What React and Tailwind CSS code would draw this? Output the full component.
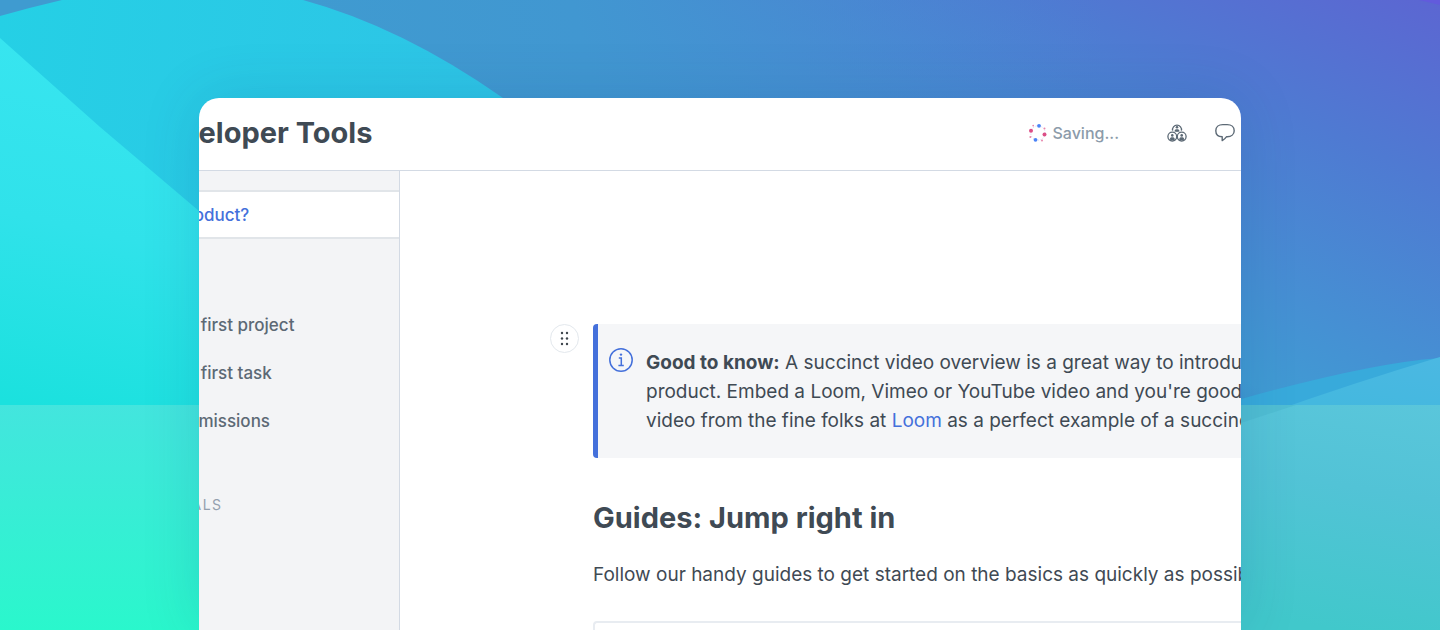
import React from "react";

function Backdrop() {
  return (
    <svg
      className="absolute inset-0 h-full w-full"
      viewBox="0 0 1440 630"
      preserveAspectRatio="none"
      aria-hidden="true"
    >
      <defs>
        <linearGradient id="sky" gradientUnits="userSpaceOnUse" x1="1440" y1="0" x2="1240" y2="430">
          <stop offset="0" stopColor="#5c66d2" />
          <stop offset="0.35" stopColor="#4f7ad2" />
          <stop offset="0.7" stopColor="#468fd3" />
          <stop offset="0.9" stopColor="#409bd3" />
          <stop offset="1" stopColor="#3b92cf" />
        </linearGradient>
        <linearGradient id="skyLeft" gradientUnits="userSpaceOnUse" x1="300" y1="100" x2="1100" y2="-80">
          <stop offset="0" stopColor="#3f9bd0" />
          <stop offset="0.35" stopColor="#4197d1" />
          <stop offset="1" stopColor="#4c82d2" stopOpacity="0" />
        </linearGradient>
        <linearGradient id="dome" gradientUnits="userSpaceOnUse" x1="0" y1="0" x2="500" y2="60">
          <stop offset="0" stopColor="#25d0e5" />
          <stop offset="1" stopColor="#2ec4e6" />
        </linearGradient>
        <linearGradient id="slope" gradientUnits="userSpaceOnUse" x1="80" y1="40" x2="0" y2="400">
          <stop offset="0" stopColor="#38e5f0" />
          <stop offset="0.5" stopColor="#30e2ea" />
          <stop offset="1" stopColor="#1be1de" />
        </linearGradient>
        <linearGradient id="seaLeft" gradientUnits="userSpaceOnUse" x1="0" y1="405" x2="0" y2="630">
          <stop offset="0" stopColor="#43e5de" />
          <stop offset="1" stopColor="#2af7cc" />
        </linearGradient>
        <linearGradient id="seaRight" gradientUnits="userSpaceOnUse" x1="1440" y1="405" x2="1400" y2="640">
          <stop offset="0" stopColor="#5ac6db" />
          <stop offset="0.4" stopColor="#52c3d6" />
          <stop offset="1" stopColor="#41c8cb" />
        </linearGradient>
        <linearGradient id="hill" gradientUnits="userSpaceOnUse" x1="1440" y1="358" x2="1430" y2="420">
          <stop offset="0" stopColor="#4bb8e2" />
          <stop offset="1" stopColor="#44b8df" />
        </linearGradient>
      </defs>
      <rect width="1440" height="630" fill="url(#sky)" />
      <rect width="1100" height="200" fill="url(#skyLeft)" />
      <path d="M1419 0L1440 5V0Z" fill="#625bdc" />
      <path d="M0 16Q32 7 62 0H303Q402 27 503 98L700 260V405H0Z" fill="url(#dome)" />
      <path d="M0 38L100 127L199 211L400 380V405H0Z" fill="url(#slope)" />
      <path d="M1100 440L1241 399Q1370 363 1440 358V480H1100Z" fill="#38aadb" />
      <path d="M1100 474L1241 423Q1340 387 1440 357V480H1100Z" fill="url(#hill)" />
      <rect y="405" width="720" height="225" fill="url(#seaLeft)" />
      <rect x="720" y="405" width="720" height="225" fill="url(#seaRight)" />
      <path d="M1100 405H1296L1241 423L1100 474Z" fill="#50bed3" />
    </svg>
  );
}

function SavingDots() {
  return (
    <svg className="size-5" viewBox="0 0 20 20" aria-hidden="true">
      <circle cx="9" cy="10" r="7.2" fill="none" stroke="#c9c9ee" strokeWidth="0.8" strokeDasharray="1 1.6" />
      <circle cx="10" cy="2.8" r="1.9" fill="#4a83f7" />
      <circle cx="6.5" cy="16.8" r="1.9" fill="#4a83f7" />
      <circle cx="2" cy="7.8" r="2" fill="#dc4f87" />
      <circle cx="15.5" cy="11.6" r="2" fill="#dc4f87" />
      <circle cx="4.2" cy="2.6" r="0.9" fill="#e887ac" />
      <circle cx="15.5" cy="5.4" r="1" fill="#e887ac" />
      <circle cx="1.4" cy="14" r="1" fill="#e887ac" />
      <circle cx="13" cy="17.6" r="1" fill="#e887ac" />
    </svg>
  );
}

function Person({ x, y }) {
  return (
    <g transform={`translate(${x} ${y})`}>
      <circle cx="0" cy="-1.3" r="1.3" fill="currentColor" stroke="none" />
      <path d="M-2.6 2.7C-2.2 0.7-1.2 0.6 0 0.6S2.2 0.7 2.6 2.7C1.6 3.5-1.6 3.5-2.6 2.7Z" fill="currentColor" stroke="none" />
    </g>
  );
}

function TeamIcon() {
  return (
    <svg className="size-5" viewBox="0 0 20 20" fill="none" stroke="currentColor" strokeWidth="1.3" aria-hidden="true">
      <path d="M5.6 7.6A4.5 4.5 0 1 1 14.4 7.6" />
      <circle cx="5.3" cy="13.6" r="4.4" />
      <circle cx="14.7" cy="13.6" r="4.4" />
      <Person x={10} y={5.6} />
      <Person x={5.3} y={13.7} />
      <Person x={14.7} y={13.7} />
    </svg>
  );
}

function CommentIcon() {
  return (
    <svg className="size-5" viewBox="0 0 20 20" fill="none" stroke="currentColor" strokeWidth="1.4" strokeLinejoin="round" aria-hidden="true">
      <path d="M7.8 1.6H12.2C16.4 1.6 19.2 4.2 19.2 7.7S16.4 13.8 12.2 13.8H11.4Q9.8 16 7.2 17.6V13.8C3.4 13.6 0.8 11.2 0.8 7.7S3.6 1.6 7.8 1.6Z" />
    </svg>
  );
}

function InfoIcon() {
  return (
    <svg className="size-6 shrink-0" viewBox="0 0 24 24" fill="none" stroke="#4470db" strokeWidth="1.5" aria-hidden="true">
      <circle cx="12" cy="12" r="11.2" />
      <path d="M9.8 10H12.3V17.4M9.4 17.6H14.8" />
      <circle cx="12" cy="6.6" r="1.2" fill="#4470db" stroke="none" />
    </svg>
  );
}

function DragHandle() {
  return (
    <button
      type="button"
      aria-label="Move block"
      className="flex size-[29px] shrink-0 items-center justify-center rounded-full border border-[#e3e8ed] bg-white"
    >
      <svg className="h-[15px] w-[11px]" viewBox="0 0 11 15" fill="#3f464d" aria-hidden="true">
        {[2, 7.5, 13].map((y) => (
          <g key={y}>
            <circle cx="3" cy={y} r="1.2" />
            <circle cx="8" cy={y} r="1.2" />
          </g>
        ))}
      </svg>
    </button>
  );
}

const pages = ["Create your first project", "Create your first task", "Manage permissions"];

export default function App() {
  return (
    <div className="relative flex h-screen flex-col overflow-hidden px-[199px] pt-[98px] font-[Inter,'Liberation_Sans',sans-serif] text-[#3f4a54] [font-optical-sizing:none]">
      <Backdrop />
      <div className="relative flex flex-1 flex-col overflow-hidden rounded-t-[20px] bg-white shadow-[0_0_60px_rgba(10,60,110,0.14)]">
        <div className="-ml-[120px] flex flex-1 flex-col">
          <header className="flex h-[73px] shrink-0 items-center justify-between border-b border-[#d3dae4] pr-1.5 pb-0.5 pl-[65px]">
            <h1 className="text-[29px] font-[650]">Developer Tools</h1>
            <div className="flex items-center gap-12 text-[#5c6975]">
              <p className="flex items-center gap-1 text-base font-medium text-[#8c9baa]">
                <SavingDots />
                Saving...
              </p>
              <div className="flex gap-7">
                <button type="button" aria-label="Collaborators">
                  <TeamIcon />
                </button>
                <button type="button" aria-label="Comments">
                  <CommentIcon />
                </button>
              </div>
            </div>
          </header>

          <div className="flex flex-1">
            <nav className="w-[321px] shrink-0 border-r border-[#d3dae4] bg-[#f3f4f6] pt-[19px] text-[17px] font-medium whitespace-nowrap text-[#5c6975]">
              <a href="#product" className="flex h-[49px] items-center border-y-2 border-[#e1e5e9] bg-white pt-0.5 pl-[22px] text-[#4470db]">
                What's a product?
              </a>
              <ul className="pt-[62px]">
                {pages.map((page) => (
                  <li key={page}>
                    <a href="#guides" className="flex h-12 items-center pt-0.5 pl-[22px]">
                      {page}
                    </a>
                  </li>
                ))}
              </ul>
              <h2 className="pt-[50px] pl-3 text-sm font-normal tracking-widest text-[#93a0ae]">FUNDAMENTALS</h2>
            </nav>

            <main className="min-w-0 flex-1 pt-[153px] pl-[150px] text-[19px] leading-[29px] whitespace-nowrap">
              <div className="flex items-start gap-3.5">
                <DragHandle />
                <aside className="flex flex-1 gap-[13px] rounded-l border-l-[5px] border-[#4470db] bg-[#f5f6f8] pt-6 pb-[23px] pl-[11px]">
                  <InfoIcon />
                  <p>
                    <strong className="font-bold">Good to know:</strong> A succinct video overview is a great way to introduce
                    <br />
                    product. Embed a Loom, Vimeo or YouTube video and you're good
                    <br />
                    video from the fine folks at{" "}
                    <a href="#loom" className="text-[#4470db]">
                      Loom
                    </a>{" "}
                    as a perfect example of a succinct
                  </p>
                </aside>
              </div>
              <div className="pl-[43px]">
                <h2 className="pt-10 text-[29px] leading-10 font-[650]">Guides: Jump right in</h2>
                <p className="pt-[22px]">Follow our handy guides to get started on the basics as quickly as possible</p>
                <div className="mt-8 h-20 rounded-l border-2 border-r-0 border-[#e8ecf1]" />
              </div>
            </main>
          </div>
        </div>
      </div>
    </div>
  );
}
